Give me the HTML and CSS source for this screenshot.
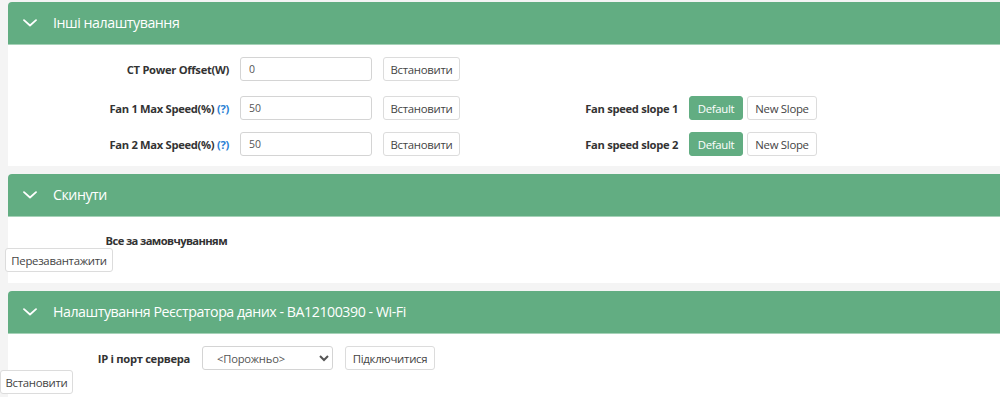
FILE: index.html
```html
<!DOCTYPE html>
<html lang="uk">
<head>
<meta charset="utf-8">
<title>Налаштування</title>
<link rel="stylesheet" href="styles.css">
</head>
<body>
<div class="page">
  <section class="panel">
    <div class="panel-head">
      <svg class="chev" width="14" height="8" viewBox="0 0 14 8"><path d="M1 1.2 L7 6.5 L13 1.2" fill="none" stroke="#fff" stroke-width="1.8" stroke-linecap="round" stroke-linejoin="round"/></svg>
      <span class="panel-title">Інші налаштування</span>
    </div>
    <div class="panel-body body-other">
      <div class="form-row row-first">
        <div class="field">
          <label class="label">CT Power Offset(W)</label>
          <input class="input" type="text" value="0">
          <button class="btn btn-set">Встановити</button>
        </div>
      </div>
      <div class="form-row row-mid">
        <div class="field">
          <label class="label">Fan 1 Max Speed(%) <a class="help">(?)</a></label>
          <input class="input" type="text" value="50">
          <button class="btn btn-set">Встановити</button>
        </div>
        <div class="field field-right">
          <label class="label label-right">Fan speed slope 1</label>
          <div class="btn-pair">
            <button class="btn btn-green">Default</button>
            <button class="btn btn-slope">New Slope</button>
          </div>
        </div>
      </div>
      <div class="form-row">
        <div class="field">
          <label class="label">Fan 2 Max Speed(%) <a class="help">(?)</a></label>
          <input class="input" type="text" value="50">
          <button class="btn btn-set">Встановити</button>
        </div>
        <div class="field field-right">
          <label class="label label-right">Fan speed slope 2</label>
          <div class="btn-pair">
            <button class="btn btn-green">Default</button>
            <button class="btn btn-slope">New Slope</button>
          </div>
        </div>
      </div>
    </div>
  </section>

  <section class="panel">
    <div class="panel-head">
      <svg class="chev" width="14" height="8" viewBox="0 0 14 8"><path d="M1 1.2 L7 6.5 L13 1.2" fill="none" stroke="#fff" stroke-width="1.8" stroke-linecap="round" stroke-linejoin="round"/></svg>
      <span class="panel-title">Скинути</span>
    </div>
    <div class="panel-body body-reset">
      <div class="label label-reset">Все за замовчуванням</div>
      <button class="btn btn-reboot">Перезавантажити</button>
    </div>
  </section>

  <section class="panel">
    <div class="panel-head">
      <svg class="chev" width="14" height="8" viewBox="0 0 14 8"><path d="M1 1.2 L7 6.5 L13 1.2" fill="none" stroke="#fff" stroke-width="1.8" stroke-linecap="round" stroke-linejoin="round"/></svg>
      <span class="panel-title">Налаштування Реєстратора даних - BA12100390 - Wi-Fi</span>
    </div>
    <div class="panel-body body-logger">
      <div class="field">
        <label class="label label-ip">IP і порт сервера</label>
        <select class="select"><option>&lt;Порожньо&gt;</option></select>
        <button class="btn btn-connect">Підключитися</button>
      </div>
      <button class="btn btn-set-out">Встановити</button>
    </div>
  </section>
</div>
</body>
</html>
```

FILE: styles.css
```css
html, body {
  margin: 0;
  padding: 0;
  background: #f4f4f4;
  font-family: "Open Sans", "Liberation Sans", sans-serif;
  color: #333;
  overflow: hidden;
}

.page {
  padding: 2px 0 0 8px;
  display: flex;
  flex-direction: column;
  gap: 8px;
}

.panel {
  background: #fff;
  border-radius: 4px 0 0 0;
}

.panel-head {
  display: flex;
  align-items: center;
  height: 43px;
  box-sizing: border-box;
  padding-left: 15px;
  background: #62ad82;
  border-bottom: 1px solid #a6d2b8;
  border-radius: 4px 0 0 0;
  gap: 16px;
}

.chev {
  display: block;
  flex: none;
}

.panel-title {
  color: #fff;
  font-size: 14.2px;
  letter-spacing: -0.45px;
  line-height: 20px;
}

.panel-body {
  display: flex;
  flex-direction: column;
}

.body-other {
  padding: 12px 0 10px;
}

.form-row {
  display: flex;
  align-items: center;
  margin-bottom: 12px;
}

.form-row:last-child {
  margin-bottom: 0;
}

.row-first {
  margin-bottom: 15px;
}

.field {
  display: flex;
  align-items: center;
  gap: 11px;
}

.field-right {
  margin-left: 11px;
}

.label {
  font-size: 11.2px;
  font-weight: 700;
  letter-spacing: -0.3px;
  color: #333;
  text-align: right;
  width: 221px;
  white-space: nowrap;
}

.label-right {
  width: 207px;
}

.help {
  color: #2a7fd4;
  font-weight: 700;
}

.input {
  width: 132px;
  height: 24px;
  box-sizing: border-box;
  border: 1px solid #d4d4d4;
  border-radius: 3px;
  padding: 0 8px;
  font-family: inherit;
  font-size: 10.5px;
  color: #555;
  outline: none;
}

.btn {
  height: 24px;
  box-sizing: border-box;
  border: 1px solid #dcdcdc;
  border-radius: 3px;
  background: #fff;
  color: #444;
  font-family: inherit;
  font-size: 11.4px;
  letter-spacing: -0.3px;
  padding: 0;
  cursor: pointer;
  white-space: nowrap;
}

.btn-set {
  width: 77px;
}

.btn-pair {
  display: flex;
  gap: 4px;
}

.btn-green {
  width: 54px;
  background: #62ad82;
  border-color: #62ad82;
  color: #fff;
}

.btn-slope {
  width: 70px;
}

.body-reset {
  padding: 16px 0 11px;
  align-items: flex-start;
}

.label-reset {
  width: 219px;
  line-height: 15px;
  letter-spacing: -0.6px;
}

.btn-reboot {
  width: 108px;
  margin-left: -3px;
}

.body-logger {
  padding: 12px 0 3px;
  align-items: flex-start;
}

.label-ip {
  width: 182px;
}

.body-logger .field {
  gap: 12px;
}

.select {
  width: 131px;
  height: 24px;
  box-sizing: border-box;
  border: 1px solid #d4d4d4;
  border-radius: 3px;
  background: #fff;
  font-family: inherit;
  font-size: 11.2px;
  letter-spacing: -0.2px;
  color: #555;
  padding: 0 0 0 10px;
}

.btn-connect {
  width: 90px;
}

.btn-set-out {
  width: 73px;
  margin-left: -8px;
}
```
